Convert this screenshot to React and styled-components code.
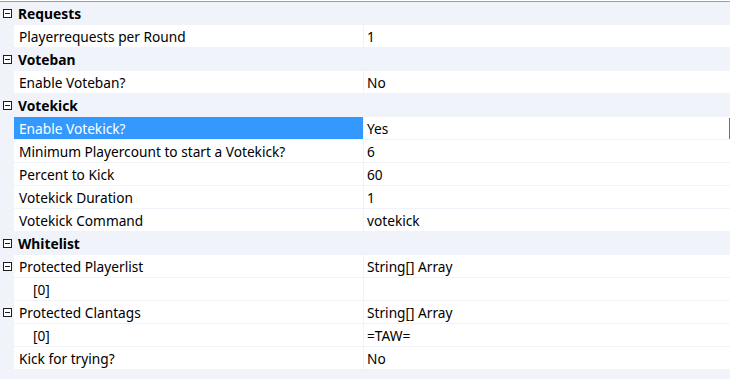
import React from "react";
import styled, { createGlobalStyle } from "styled-components";

const GlobalStyle = createGlobalStyle`
  html, body {
    margin: 0;
    padding: 0;
    background: #ffffff;
  }
  body {
    font-family: "Noto Sans", "Open Sans", sans-serif;
    font-size: 13.7px;
    color: #000000;
  }
`;

const sections = [
  {
    title: "Requests",
    items: [{ name: "Playerrequests per Round", value: "1" }],
  },
  {
    title: "Voteban",
    items: [{ name: "Enable Voteban?", value: "No" }],
  },
  {
    title: "Votekick",
    items: [
      { name: "Enable Votekick?", value: "Yes", selected: true },
      { name: "Minimum Playercount to start a Votekick?", value: "6" },
      { name: "Percent to Kick", value: "60" },
      { name: "Votekick Duration", value: "1" },
      { name: "Votekick Command", value: "votekick" },
    ],
  },
  {
    title: "Whitelist",
    items: [
      { name: "Protected Playerlist", value: "String[] Array", expanded: true },
      { name: "[0]", value: "", child: true },
      { name: "Protected Clantags", value: "String[] Array", expanded: true },
      { name: "[0]", value: "=TAW=", child: true },
      { name: "Kick for trying?", value: "No" },
    ],
  },
];

function Expander() {
  return (
    <svg width="9" height="9" viewBox="0 0 9 9">
      <rect x="0.5" y="0.5" width="8" height="8" fill="#ffffff" stroke="#1e1e1e" />
      <line x1="2" y1="4.5" x2="7" y2="4.5" stroke="#1e1e1e" />
    </svg>
  );
}

function App() {
  return (
    <>
      <GlobalStyle />
      <Grid>
        {sections.map((section) => (
          <React.Fragment key={section.title}>
            <CategoryRow>
              <Gutter>
                <Expander />
              </Gutter>
              <CategoryLabel>{section.title}</CategoryLabel>
            </CategoryRow>
            {section.items.map((item, i) => (
              <PropertyRow key={section.title + i}>
                <Gutter>{item.expanded && <Expander />}</Gutter>
                <NameCell selected={item.selected} child={item.child}>
                  {item.name}
                </NameCell>
                <ValueCell>
                  {item.value}
                  {item.selected && <EditEdge />}
                </ValueCell>
              </PropertyRow>
            ))}
          </React.Fragment>
        ))}
      </Grid>
    </>
  );
}

const Grid = styled.div`
  margin-top: 1px;
  border-top: 1px solid #a0a0a0;
  height: 377px;
  display: flex;
  flex-direction: column;
  gap: 1px;
  background: #f0f4fa;
  overflow: hidden;
`;

const CategoryRow = styled.div`
  display: flex;
  align-items: center;
  height: 22px;
  flex-shrink: 0;
  background: #f0f4fa;
`;

const Gutter = styled.div`
  width: 13px;
  flex-shrink: 0;
  display: flex;
  align-items: center;
  justify-content: flex-start;
  padding-left: 3px;
  padding-top: 1px;
  box-sizing: border-box;
  height: 100%;
  background: #f0f4fa;
`;

const CategoryLabel = styled.div`
  box-sizing: border-box;
  height: 22px;
  padding: 2px 0 0 5px;
  font-size: 13.8px;
  font-weight: bold;
  line-height: 20px;
`;

const PropertyRow = styled.div`
  display: flex;
  height: 22px;
  flex-shrink: 0;
  gap: 1px;
  background: #f0f4fa;
`;

const NameCell = styled.div`
  width: 349px;
  flex-shrink: 0;
  box-sizing: border-box;
  padding-top: 2px;
  padding-left: ${(props) => (props.child ? "19px" : "5px")};
  line-height: 20px;
  white-space: nowrap;
  background: ${(props) => (props.selected ? "#3399ff" : "#ffffff")};
  color: ${(props) => (props.selected ? "#ffffff" : "#000000")};
`;

const ValueCell = styled.div`
  position: relative;
  flex: 1;
  box-sizing: border-box;
  padding-top: 2px;
  padding-left: 3px;
  line-height: 20px;
  white-space: nowrap;
  background: #ffffff;
`;

const EditEdge = styled.span`
  position: absolute;
  left: 365px;
  top: 1px;
  bottom: 0;
  width: 1px;
  background: #6e6e6e;
`;

export default App;
